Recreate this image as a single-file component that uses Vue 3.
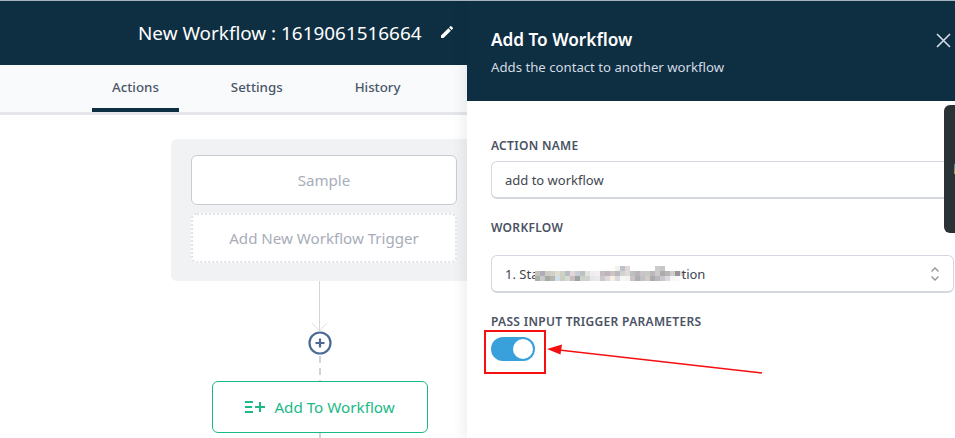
<script setup>
const tabs = ['Actions', 'Settings', 'History']
const row1 = ['','','','','','','','','','','','','','','','','#f4f1f1','#bdc1c8','#e3d6d8','','','','','','#cfcace','#c4c8c8','','','','']
const row2 = [
  '#bfc3bc','#aeadb5','#ccccc5','#cfd1c6','#dedcd3','#ced3c1','#b7bcc5','#e3d6d9','#c7ced9','#bbc2be','#e1e1e0','#efeded','#f1f0f1','#c6b9c2','#bdb5be',
  '#ccc4c4','#bbb9b9','#d3d2d2','#dedad9','#bbc0c1','#b8b4b7','#cac4c9','#c5cac6','#bdb7bb','#c9ccc8','#aeabad','#bbb6b6','#cfccd0','#9a949a','#dedede'
]
const row3 = [
  '#aeafa9','#c7c9cd','#a8a9a3','#b5b7af','#cde0ea','#cacfc1','#d4dad5','#cdbabf','#9ea2a2','#cdd2c9','#d0d3cc','#e7e5e5','#ebe8eb','#c9c9d0','#e2d8d7',
  '#f8efe2','#d6dae1','#f7f7f7','#f3f3f3','#c9c5c6','#b1acaf','#bfc2c4','#d0ccca','#adaaad','#bbb7c2','#c9c8c6','#dfdadf','#f5f5f5','#fafafa','#ffffff'
]
const mosaic = [...row1, ...row2, ...row3]
</script>

<template>
  <div class="page">
    <main class="main">
      <header class="top">
        <span class="wf-title">New Workflow : 1619061516664</span>
        <svg class="pencil" viewBox="0 0 24 24" width="16" height="16">
          <path fill="#fff" d="M3 17.25V21h3.75L17.81 9.94l-3.75-3.75L3 17.25zM20.71 7.04a1 1 0 0 0 0-1.41l-2.34-2.34a1 1 0 0 0-1.41 0l-1.83 1.83 3.75 3.75 1.83-1.83z"/>
        </svg>
      </header>
      <nav class="tabs">
        <a v-for="(t, i) in tabs" :key="t" class="tab" :class="{ active: i === 0 }">{{ t }}</a>
      </nav>
      <section class="canvas">
        <div class="trigger-card">
          <div class="trigger">Sample</div>
          <div class="trigger dotted">Add New Workflow Trigger</div>
        </div>
        <div class="link">
          <svg width="40" height="100" viewBox="0 0 40 100">
            <path d="M19.5 0V50" stroke="#d3d5da" fill="none"/>
            <path d="M12 42L19.5 50L27 42" stroke="#dcdee2" fill="none"/>
            <circle cx="20" cy="62" r="10.5" fill="#fff" stroke="#4a6a94" stroke-width="2.2"/>
            <path d="M15.5 62H24.5M20 57.5V66.5" stroke="#4a6a94" stroke-width="2.2"/>
            <path d="M20 75V100" stroke="#cfd2da" stroke-width="2" stroke-dasharray="7 5"/>
          </svg>
        </div>
        <div class="action">
          <svg width="21" height="14" viewBox="0 0 21 14">
            <path d="M0 2H8M0 7H7M0 12H8M10 7H20M15 2V12" stroke="#1bb987" stroke-width="2" fill="none"/>
          </svg>
          <span>Add To Workflow</span>
        </div>
        <div class="tail"></div>
      </section>
    </main>

    <aside class="panel">
      <header class="panel-head">
        <div>
          <h2>Add To Workflow</h2>
          <p>Adds the contact to another workflow</p>
        </div>
        <svg class="close" width="16" height="16" viewBox="0 0 16 16">
          <path d="M2 2L15 15M15 2L2 15" stroke="#d5deea" stroke-width="1.6" fill="none"/>
        </svg>
      </header>
      <div class="panel-body">
        <label class="label">ACTION NAME</label>
        <div class="field">add to workflow</div>
        <label class="label second">WORKFLOW</label>
        <div class="field select">
          <span class="value">1. Sta<span class="mosaic"><i v-for="(c, i) in mosaic" :key="i" :style="{ background: c || 'transparent' }"></i></span>tion</span>
          <svg width="10" height="16" viewBox="0 0 10 16">
            <path d="M1.5 5.5L5 2L8.5 5.5M1.5 10.5L5 14L8.5 10.5" stroke="#8f959c" stroke-width="1.4" fill="none"/>
          </svg>
        </div>
        <label class="label third">PASS INPUT TRIGGER PARAMETERS</label>
        <div class="toggle"><span class="knob"></span></div>
      </div>
    </aside>

    <div class="widget"><span class="strip"></span></div>
    <div class="redbox"></div>
    <svg class="arrow" width="230" height="40" viewBox="0 0 230 40">
      <path d="M215 32L12 9" stroke="#f60f10" stroke-width="1.6" fill="none"/>
      <path d="M0 8L15 3.5L13.5 13.5Z" fill="#f60f10"/>
    </svg>
  </div>
</template>

<style>
html, body { margin: 0; background: #fff; }
</style>

<style scoped>
.page {
  position: relative;
  display: flex;
  width: 955px;
  height: 438px;
  overflow: hidden;
  font-family: "Noto Sans", "Open Sans", sans-serif;
  background: #fff;
  border-top: 1px solid #a9b4c2;
  box-sizing: border-box;
}
.main { width: 467px; flex: none; overflow: hidden; }
.top {
  height: 64px;
  background: #0e2e42;
  display: flex;
  align-items: center;
  padding-left: 138px;
  gap: 17px;
}
.wf-title { color: #fff; font-size: 18.9px; line-height: 24px; white-space: nowrap; }
.pencil { margin-top: -2px; }
.tabs {
  height: 47px;
  display: flex;
  gap: 32px;
  padding-left: 92px;
  background: #f9fafc;
  border-bottom: 3px solid #e4e6ea;
}
.tab {
  height: 47px;
  box-sizing: border-box;
  padding: 12px 20px 0;
  font-size: 13.3px;
  line-height: 20px;
  font-weight: 500;
  color: #4a5568;
  border-bottom: 4px solid transparent;
}
.tab.active { border-bottom-color: #0e2e42; }
.canvas {
  width: 640px;
  display: flex;
  flex-direction: column;
  align-items: flex-start;
  padding-top: 24px;
}
.trigger-card {
  width: 306px;
  height: 142px;
  box-sizing: border-box;
  margin-left: 171px;
  padding: 16px 20px;
  background: #f1f2f4;
  border-radius: 6px;
}
.trigger {
  height: 50px;
  box-sizing: border-box;
  display: flex;
  align-items: center;
  justify-content: center;
  background: #fff;
  border: 1px solid #c9ced4;
  border-radius: 6px;
  color: #a8adb9;
  font-size: 15.1px;
}
.trigger.dotted {
  margin-top: 8px;
  border: 2px dotted #e1e3e7;
}
.link { margin-left: 300px; height: 100px; }
.link svg { display: block; }
.action {
  margin-left: 212px;
  width: 216px;
  height: 52px;
  box-sizing: border-box;
  display: flex;
  align-items: center;
  justify-content: center;
  gap: 8px;
  background: #fff;
  border: 1px solid #1bb987;
  border-radius: 6px;
  color: #1bb987;
  font-size: 15.2px;
}
.tail { margin-left: 319px; width: 2px; height: 5px; background: #cfd2da; }
.panel {
  flex: 1;
  position: relative;
  background: #fff;
  box-shadow: -6px 0 10px rgba(20, 30, 50, 0.06);
}
.panel-head {
  height: 100px;
  box-sizing: border-box;
  background: #0e2e42;
  display: flex;
  justify-content: space-between;
  padding: 27px 4px 0 24px;
}
.panel-head h2 { margin: 0; color: #fff; font-size: 17.2px; line-height: 24px; font-weight: 600; }
.panel-head p { margin: 6px 0 0; color: #d3dbe3; font-size: 13.2px; line-height: 18px; }
.close { margin-top: 4px; }
.panel-body { padding: 37px 1px 0 24px; display: flex; flex-direction: column; align-items: flex-start; }
.label {
  font-size: 12px;
  line-height: 16px;
  font-weight: 600;
  color: #4a5263;
  letter-spacing: 0.3px;
}
.label.second { margin-top: 21px; }
.label.third { margin-top: 21px; }
.field {
  width: 100%;
  box-sizing: border-box;
  height: 38px;
  margin-top: 7px;
  padding: 0 13px;
  display: flex;
  align-items: center;
  border: 1px solid #d4d6e0;
  border-bottom-width: 2px;
  border-radius: 6px;
  font-size: 13px;
  color: #3f4650;
}
.select { margin-top: 19px; justify-content: space-between; padding-right: 13px; }
.value { display: inline-flex; align-items: center; }
.mosaic {
  display: inline-grid;
  grid-template-columns: repeat(30, 5px);
  grid-auto-rows: 5px;
  margin: 0 -4px 0 -3px;
}
.mosaic i { display: block; }
.toggle {
  width: 44px;
  height: 24px;
  margin-top: 7px;
  border-radius: 12px;
  background: #38a0db;
  display: flex;
  align-items: center;
  justify-content: flex-end;
  padding-right: 2px;
  box-sizing: border-box;
}
.knob { width: 20px; height: 20px; border-radius: 50%; background: #fff; }
.widget {
  position: absolute;
  left: 944px;
  top: 104px;
  width: 11px;
  height: 128px;
  background: #2b3236;
  border-radius: 6px 0 0 6px;
}
.strip {
  position: absolute;
  right: 0;
  top: 59px;
  width: 1px;
  height: 10px;
  background: linear-gradient(#2e8cb0, #b9a63a);
}
.redbox {
  position: absolute;
  left: 484px;
  top: 329px;
  width: 62px;
  height: 44px;
  box-sizing: border-box;
  border: 2px solid #f60f10;
}
.arrow {
  position: absolute;
  left: 547px;
  top: 340px;
}
</style>
